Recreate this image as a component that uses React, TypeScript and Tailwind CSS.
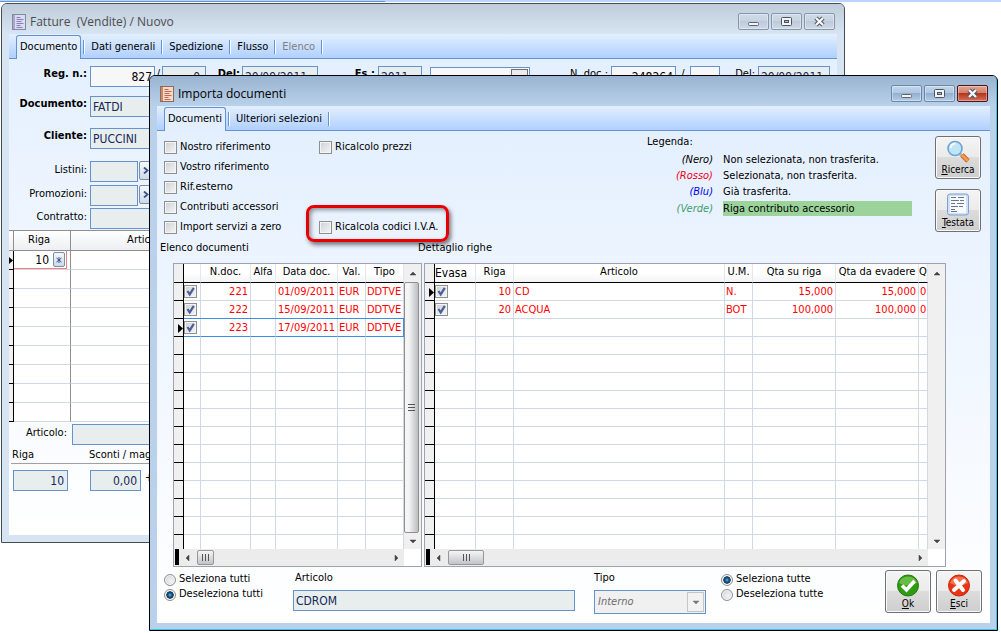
import { ReactNode } from 'react'
import clsx from 'clsx'

interface WindowProps {
  title: string
  active?: boolean
  className?: string
  children: ReactNode
}

interface Tab {
  label: string
  disabled?: boolean
}

interface Column {
  label: string
  width?: string
  align?: string
  large?: boolean
}

interface GridRow {
  cells: string[]
  current?: boolean
  selected?: boolean
}

const invoiceTabs: Tab[] = [
  { label: 'Documento' },
  { label: 'Dati generali' },
  { label: 'Spedizione' },
  { label: 'Flusso' },
  { label: 'Elenco', disabled: true },
]

const importTabs: Tab[] = [{ label: 'Documenti' }, { label: 'Ulteriori selezioni' }]

const documentColumns: Column[] = [
  { label: '', width: 'w-[17px]' },
  { label: 'N.doc.', width: 'w-[50px]', align: 'text-right' },
  { label: 'Alfa', width: 'w-[25px]' },
  { label: 'Data doc.', width: 'w-[62px]', align: 'text-right' },
  { label: 'Val.', width: 'w-[28px]' },
  { label: 'Tipo' },
]

const documentRows: GridRow[] = [
  { cells: ['221', '', '01/09/2011', 'EUR', 'DDTVE'] },
  { cells: ['222', '', '15/09/2011', 'EUR', 'DDTVE'] },
  { cells: ['223', '', '17/09/2011', 'EUR', 'DDTVE'], current: true, selected: true },
]

const lineColumns: Column[] = [
  { label: 'Evasa', width: 'w-[41px]', large: true },
  { label: 'Riga', width: 'w-[38px]', align: 'text-right' },
  { label: 'Articolo' },
  { label: 'U.M.', width: 'w-[28px]' },
  { label: 'Qta su riga', width: 'w-[83px]', align: 'text-right' },
  { label: 'Qta da evadere', width: 'w-[83px]', align: 'text-right' },
  { label: 'Q', width: 'w-[9px]' },
]

const lineRows: GridRow[] = [
  { cells: ['10', 'CD', 'N.', '15,000', '15,000', '0'], current: true },
  { cells: ['20', 'ACQUA', 'BOT', '100,000', '100,000', '0'] },
]

const legend = [
  { name: '(Nero)', color: 'text-black', text: 'Non selezionata, non trasferita.' },
  { name: '(Rosso)', color: 'text-[#f00020]', text: 'Selezionata, non trasferita.' },
  { name: '(Blu)', color: 'text-[#0000f0]', text: 'Già trasferita.' },
  { name: '(Verde)', color: 'text-[#3c9c70]', text: 'Riga contributo accessorio', filled: true },
]

function DocIcon({ active }: { active?: boolean }) {
  const ink = active ? '#a8452c' : '#6a62a8'
  return (
    <svg width="14" height="16" viewBox="0 0 14 16" className="shrink-0">
      <rect x="0.5" y="0.5" width="13" height="15" fill={active ? '#f6d9c4' : '#dcdcf0'} stroke={active ? '#8d6a5c' : '#8488a4'} />
      <rect x="1" y="1" width="2" height="14" fill={active ? '#c98a6a' : '#a9a8cc'} />
      <path d="M4.5 3.5h4M4.5 5.5h7M4.5 7.5h5M4.5 9.5h7M4.5 11.5h4M4.5 13.5h6" stroke={ink} opacity="0.75" />
    </svg>
  )
}

function CaptionButton({ kind, active }: { kind: 'min' | 'max' | 'close'; active?: boolean }) {
  const red = active && kind === 'close'
  return (
    <button
      aria-label={kind}
      className={clsx(
        'flex h-[17px] w-[31px] items-center justify-center rounded-[2px] border shadow-[inset_0_0_0_1px_rgba(255,255,255,0.35)]',
        red
          ? 'border-[#4a1418] bg-[linear-gradient(#e2a594,#d37d69_48%,#b6361d_50%,#d4705a)]'
          : active
            ? 'border-[#6d87a8] bg-[linear-gradient(#c2d5ea,#afc7e1_48%,#93b0d0_50%,#b4cce6)]'
            : 'border-[#8795ab] bg-[linear-gradient(#cfdbe7,#c6d3e1_48%,#bccada_50%,#cddae7)]'
      )}
    >
      <svg width="13" height="11" viewBox="0 0 13 11">
        {kind === 'min' && <rect x="1.5" y="6.5" width="10" height="3" rx="1" fill="#f4f4f4" stroke="#5b6270" />}
        {kind === 'max' && (
          <>
            <rect x="1.5" y="1.5" width="10" height="8" rx="1" fill="#f4f4f4" stroke="#4c5462" />
            <rect x="4.5" y="4.5" width="4" height="2" fill="#a9bcd2" stroke="#4c5462" />
          </>
        )}
        {kind === 'close' && (
          <>
            <path d="M3 2l7 7M10 2l-7 7" stroke="#4c5462" strokeWidth="4.4" />
            <path d="M3 2l7 7M10 2l-7 7" stroke="#f6f6f6" strokeWidth="2.4" />
          </>
        )}
      </svg>
    </button>
  )
}

function Window({ title, active, className, children }: WindowProps) {
  return (
    <section
      className={clsx(
        'absolute overflow-hidden rounded-t-[6px] border',
        active
          ? 'border-black bg-[#b9d1ea] shadow-[inset_-1px_-1px_0_#35c5e8]'
          : 'border-[#444c55] bg-[#d7e4f2]',
        className
      )}
    >
      <header
        className={clsx(
          'flex h-[30px] items-center gap-1 pt-[5px] pl-[10px] font-["Open_Sans",sans-serif] text-[12px]',
          active
            ? 'mr-px bg-linear-to-b from-[#99b4d1] to-[#b9d1ea] pr-2 text-black'
            : 'bg-linear-to-b from-[#bfcddb] to-[#d7e4f2] pr-[9px] text-[#4c4c4c]'
        )}
      >
        <DocIcon active={active} />
        <h1 className="flex-1 whitespace-pre">{title}</h1>
        <div className="flex gap-[2px]">
          <CaptionButton kind="min" active={active} />
          <CaptionButton kind="max" active={active} />
          <CaptionButton kind="close" active={active} />
        </div>
      </header>
      <div className="mx-[7px] mb-[7px] bg-linear-to-b from-[#e3efff] to-white">{children}</div>
    </section>
  )
}

function TabStrip({ tabs }: { tabs: Tab[] }) {
  return (
    <div role="tablist" className="flex h-[25px] items-end border-b border-[#6593cf] bg-linear-to-b from-[#e3efff] to-[#b0d0ff] pl-[7px]">
      {tabs.map((tab, i) => (
        <div key={tab.label} className="flex items-center">
          <button
            role="tab"
            aria-selected={i === 0}
            disabled={tab.disabled}
            className={clsx(
              'whitespace-nowrap',
              i === 0
                ? '-mb-px h-[24px] rounded-t-[3px] border border-b-0 border-[#6593cf] bg-[#e3efff] px-[3px]'
                : 'h-[23px] px-[6px] pt-px',
              tab.disabled && 'text-[#808080]'
            )}
          >
            {tab.label}
          </button>
          <span className={clsx('h-[14px] w-[2px] border-r border-l border-r-white border-l-[#6593cf]', i === 0 && 'ml-[2px]')} />
        </div>
      ))}
    </div>
  )
}

function Check({ label, checked, className }: { label?: string; checked?: boolean; className?: string }) {
  return (
    <label className={clsx('flex items-center gap-[3px] whitespace-nowrap', className)}>
      <span className="relative block size-[13px] shrink-0">
        <input
          type="checkbox"
          defaultChecked={checked}
          aria-label={label ?? 'Seleziona'}
          className="peer block size-[13px] appearance-none border border-[#8e8f8f] bg-linear-to-br from-[#cdd1d5] to-[#f6f6f6] shadow-[inset_0_0_0_1px_#f4f4f4]"
        />
        <svg viewBox="0 0 13 13" className="pointer-events-none absolute inset-0 hidden peer-checked:block">
          <path d="M3.5 6l2.2 3.4L9.8 2.8" fill="none" stroke="#4a5f97" strokeWidth="2.2" />
        </svg>
      </span>
      {label}
    </label>
  )
}

function Radio({ name, label, checked }: { name: string; label: string; checked?: boolean }) {
  return (
    <label className="flex h-[15px] items-center gap-[3px] whitespace-nowrap">
      <input
        type="radio"
        name={name}
        defaultChecked={checked}
        className="size-[12px] appearance-none rounded-full border border-[#8e8f8f] bg-[radial-gradient(circle_at_60%_60%,#f4f4f4,#c8ccd0)] shadow-[inset_0_0_0_1px_#fafafa] checked:bg-[radial-gradient(circle,#5cc0ea_0,#1b5c94_25%,#12324f_48%,#eef0f2_58%)]"
      />
      {label}
    </label>
  )
}

function Field({ label, value, className }: { label: string; value?: string; className?: string }) {
  return (
    <input
      aria-label={label}
      defaultValue={value}
      className={clsx('h-[21px] shrink-0 border border-[#6593cf] px-[2px] text-[12px] leading-4', className)}
    />
  )
}

const shaded = 'bg-[#e8eeee] text-[#14285a]'

function Arrow({ dir }: { dir: 'up' | 'down' | 'left' | 'right' }) {
  const d = { up: 'M1 6l3-3 3 3z', down: 'M1 3l3 3 3-3z', left: 'M6 1v6l-3-3z', right: 'M3 1v6l3-3z' }[dir]
  return (
    <svg width="8" height="8" viewBox="0 0 8 8" className="shrink-0">
      <path d={d} fill="#444" stroke="#444" strokeWidth="0.5" />
    </svg>
  )
}

function DataGrid({ columns, rows, thumb, className }: { columns: Column[]; rows: GridRow[]; thumb: string; className?: string }) {
  const blanks = Array.from({ length: 15 - rows.length }, (): GridRow => ({ cells: columns.slice(1).map(() => '') }))
  return (
    <div className={clsx('border border-[#a0a3ab] bg-white', className)}>
      <div className="flex h-[285px]">
        <div className="min-w-0 flex-1 overflow-hidden">
          <table className="w-full table-fixed border-separate border-spacing-0">
            <thead>
              <tr className="h-[19px] bg-linear-to-b from-white from-50% to-[#f1f2f4]">
                <th className="w-[10px] border-r border-b border-black bg-[#f0f0f0]" />
                {columns.map((col, i) => (
                  <th
                    key={i}
                    className={clsx(
                      'overflow-hidden border-r border-b border-r-[#e4e7ec] border-b-black p-0 font-normal whitespace-nowrap',
                      col.width,
                      col.large ? 'text-left text-[12px] leading-[16px]' : 'pb-[3px] leading-[15px]'
                    )}
                  >
                    {col.label}
                  </th>
                ))}
              </tr>
            </thead>
            <tbody>
              {[...rows, ...blanks].map((row, r) => {
                const line = row.selected
                  ? 'border-b border-b-[#3a8ee6] border-r border-r-[#d0d7e5] shadow-[0_-1px_0_#3a8ee6] last:border-r-[#3a8ee6]'
                  : 'border-r border-b border-[#d0d7e5]'
                return (
                  <tr key={r} className="h-[18px]">
                    <td className="border-r border-b border-black bg-[#f0f0f0] p-0">
                      {row.current && (
                        <svg width="9" height="9" viewBox="0 0 9 9" className="mt-[2px] block">
                          <path d="M4 0l5 4.5-5 4.5z" />
                        </svg>
                      )}
                    </td>
                    <td className={clsx('p-0', line)}>{r < rows.length && <Check checked className="mb-px" />}</td>
                    {row.cells.map((cell, c) => (
                      <td
                        key={c}
                        className={clsx(
                          'overflow-hidden p-0 px-px pt-px leading-4 whitespace-nowrap text-[#ff0000]',
                          line,
                          columns[c + 1].align === 'text-right' && 'pr-[2px] text-right'
                        )}
                      >
                        {cell}
                      </td>
                    ))}
                  </tr>
                )
              })}
            </tbody>
          </table>
        </div>
        <div className="flex w-[17px] flex-col items-center bg-[#f0f0f0]">
          <div className="flex h-[18px] items-center">
            <Arrow dir="up" />
          </div>
          <div className="flex w-full flex-1 items-center">
            {columns.length === 6 && (
              <div className="flex h-full w-[15px] items-center justify-center rounded-[2px] border border-[#8f8f8f] bg-linear-to-r from-[#f5f5f5] from-30% to-[#bcbdc2]">
                <span className="h-[7px] w-[7px] bg-[repeating-linear-gradient(#555_0_1px,transparent_1px_3px)]" />
              </div>
            )}
          </div>
          <div className="flex h-[16px] items-center">
            <Arrow dir="down" />
          </div>
        </div>
      </div>
      <div className="flex h-[17px]">
        <div className="flex flex-1 items-center bg-[#ececec] pl-px">
          <span className="mb-px h-[16px] w-[4px] bg-black" />
          <span className="mx-[4px] flex">
            <Arrow dir="left" />
          </span>
          <div className={clsx('ml-[2px] flex h-[15px] items-center justify-center rounded-[2px] border border-[#979797] bg-linear-to-b from-[#f5f5f5] to-[#c3c4c8]', thumb)}>
            <span className="h-[7px] w-[7px] bg-[repeating-linear-gradient(90deg,#555_0_1px,transparent_1px_3px)]" />
          </div>
          <span className="mr-[4px] ml-auto">
            <Arrow dir="right" />
          </span>
        </div>
        <div className="w-[17px]" />
      </div>
    </div>
  )
}

function ToolButton({ label, children }: { label: string; children: ReactNode }) {
  return (
    <button className="flex h-[43px] w-[46px] shrink-0 flex-col items-center rounded-[3px] border border-[#707070] bg-[linear-gradient(#f4f4f4,#ebebeb_48%,#dcdcdc_50%,#cecece)] pt-[3px] text-[10px] leading-[14px] shadow-[inset_0_0_0_1px_#fafafa]">
      {children}
      <span>
        <u>{label[0]}</u>
        {label.slice(1)}
      </span>
    </button>
  )
}

function SearchIcon() {
  return (
    <svg width="24" height="23" viewBox="0 0 24 23">
      <path d="M14 14l3 2.500" stroke="#a9b4bf" strokeWidth="3" />
      <path d="M16 15l6 6" stroke="#c5622a" strokeWidth="4.600" />
      <path d="M16 15l6 6" stroke="#f59a4c" strokeWidth="3" />
      <circle cx="9" cy="8.500" r="7" fill="#bfe6f8" stroke="#6fa3cf" strokeWidth="1.600" />
      <path d="M4.500 8a5 5 0 0 1 5-4.500" fill="none" stroke="#fff" strokeWidth="2" />
    </svg>
  )
}

function SheetIcon() {
  return (
    <svg width="24" height="23" viewBox="0 0 24 23">
      <rect x="1.500" y="1" width="21" height="21" rx="2.500" fill="#cfe0f8" stroke="#7f9fd0" />
      <rect x="4" y="3" width="16" height="17" fill="#f6faff" />
      <path d="M5 4.500h5M12 4.500h6M5 7.500h8M14 7.500h4M5 10.500h4M11 10.500h7M5 13.500h7M13 13.500h4M5 16.500h4M5 18.500h6" stroke="#6c7686" />
    </svg>
  )
}

function OkIcon() {
  return (
    <svg width="24" height="23" viewBox="0 0 24 23">
      <circle cx="12" cy="11.500" r="10.500" fill="#2f9a12" stroke="#1f7a0c" />
      <path d="M3 9a9.500 9.500 0 0 1 18 0q-9 5-18 0z" fill="#7fca5c" opacity="0.7" />
      <path d="M6 11.500l4.500 4.500 8-9" fill="none" stroke="#fff" strokeWidth="3.600" />
    </svg>
  )
}

function ExitIcon() {
  return (
    <svg width="24" height="23" viewBox="0 0 24 23">
      <circle cx="12" cy="11.500" r="10.500" fill="#ea3312" stroke="#c42408" />
      <path d="M3 9a9.500 9.500 0 0 1 18 0q-9 5-18 0z" fill="#f98a6c" opacity="0.7" />
      <path d="M8.500 6.500l7.500 9.500M17 7l-10 9" stroke="#fff" strokeWidth="4" strokeLinecap="round" />
    </svg>
  )
}

function SideLabel({ children, bold }: { children: ReactNode; bold?: boolean }) {
  return (
    <span className={clsx('mr-[3px] w-[78px] shrink-0 text-right leading-[15px] whitespace-nowrap', bold ? 'font-bold' : 'pt-px')}>
      {children}
    </span>
  )
}

function LookupButton() {
  return (
    <button aria-label="Cerca" className="ml-px flex h-[19px] w-[14px] items-center justify-center rounded-[2px] border border-[#7d8da8] bg-linear-to-b from-[#f4f8fd] to-[#ccdaec]">
      <svg width="6" height="7" viewBox="0 0 6 7">
        <path d="M1 0.500l3.500 3-3.500 3" fill="none" stroke="#3c5484" strokeWidth="1.800" />
      </svg>
    </button>
  )
}

function InvoiceWindow() {
  return (
    <Window title="Fatture  (Vendite) / Nuovo" className="top-[3px] right-[156px] left-px">
      <TabStrip tabs={invoiceTabs} />
      <div className="h-[476px] overflow-hidden pt-[7px]">
        <div className="flex h-[30px] items-start leading-[15px] whitespace-nowrap">
          <SideLabel bold>Reg. n.:</SideLabel>
          <Field label="Reg. n." value="827" className="w-[65px] bg-[#f7f7f7] text-right" />
          <span className="w-[7px] text-center">/</span>
          <Field label="Sottonumero" value="0" className={clsx('w-[44px] pr-[5px] text-right', shaded)} />
          <span className="w-[36px] pr-[2px] text-right font-bold">Del:</span>
          <Field label="Del" value="20/09/2011" className={clsx('w-[76px]', shaded)} />
          <span className="w-[60px] pr-[3px] text-right font-bold">Es.:</span>
          <Field label="Esercizio" value="2011" className={clsx('w-[44px]', shaded)} />
          <span className="relative mt-px ml-[8px] block h-[24px] w-[100px] border border-[#6593cf] bg-[#f7f7f7]">
            <select aria-label="Stato" className="h-full w-full appearance-none px-[3px] text-[11px]">
              <option>Confermato</option>
            </select>
            <span className="pointer-events-none absolute top-px right-px flex h-5 w-[17px] items-center justify-center border border-[#707070] bg-[#ececec]">
              <Arrow dir="down" />
            </span>
          </span>
          <span className="ml-auto pr-[3px]">N. doc.:</span>
          <Field label="N. doc." value="248264" className="w-[65px] bg-[#f7f7f7] text-right" />
          <span className="w-[14px] text-center">/</span>
          <Field label="Serie" className="w-[30px] bg-[#f7f7f7]" />
          <span className="w-[38px] pr-[3px] text-right">Del:</span>
          <Field label="Data documento" value="20/09/2011" className={clsx('mr-[7px] w-[72px]', shaded)} />
        </div>
        <div className="flex h-[32px]">
          <SideLabel bold>Documento:</SideLabel>
          <Field label="Documento" value="FATDI" className={clsx('w-[90px]', shaded)} />
        </div>
        <div className="flex h-[33px]">
          <SideLabel bold>Cliente:</SideLabel>
          <Field label="Cliente" value="PUCCINI" className={clsx('w-[90px]', shaded)} />
        </div>
        <div className="flex h-[24px]">
          <SideLabel>Listini:</SideLabel>
          <Field label="Listini" className={clsx('w-[48px]', shaded)} />
          <LookupButton />
        </div>
        <div className="flex h-[23px]">
          <SideLabel>Promozioni:</SideLabel>
          <Field label="Promozioni" className={clsx('w-[48px]', shaded)} />
          <LookupButton />
        </div>
        <div className="flex h-[22px]">
          <SideLabel>Contratto:</SideLabel>
          <Field label="Contratto" className={clsx('w-[90px]', shaded)} />
        </div>
        <table className="w-full table-fixed border-separate border-spacing-0 border-t border-[#8f8f8f]">
          <thead>
            <tr className="h-[20px] bg-linear-to-b from-white to-[#eceef2]">
              <th className="w-[5px] border-r border-b border-[#8f8f8f] p-0" />
              <th className="w-[57px] border-r border-b border-[#8f8f8f] p-0 pr-[6px] font-normal">Riga</th>
              <th className="w-[150px] border-b border-[#8f8f8f] p-0 font-normal">Articolo</th>
              <th className="border-b border-[#8f8f8f] p-0" />
            </tr>
          </thead>
          <tbody className="bg-white">
            {Array.from({ length: 9 }, (_, r) => (
              <tr key={r} className="h-[19px]">
                <td className="border-r border-b border-black bg-[#f0f0f0] p-0">
                  {r === 0 && (
                    <svg width="4" height="7" viewBox="0 0 4 7" className="block">
                      <path d="M0 0l4 3.500-4 3.500z" />
                    </svg>
                  )}
                </td>
                <td className="border-r border-b border-r-[#8f8f8f] border-b-[#d0d7e5] p-0">
                  {r === 0 && (
                    <div className="mr-[3px] flex h-[18px] items-center justify-end gap-[4px] border-r border-b border-[#f08080] pr-px text-[12px] leading-4">
                      10
                      <button aria-label="Dettaglio" className="flex h-[15px] w-[12px] items-center justify-center rounded-[2px] border border-[#7d8da8] bg-linear-to-b from-[#f4f8fd] to-[#ccdaec]">
                        <svg width="6" height="6" viewBox="0 0 6 6">
                          <path d="M3 0v6M0.500 1l5 4M5.500 1l-5 4" stroke="#3c5484" />
                        </svg>
                      </button>
                    </div>
                  )}
                </td>
                <td className="border-b border-[#d0d7e5] p-0" />
                <td className="border-b border-[#d0d7e5] p-0" />
              </tr>
            ))}
          </tbody>
        </table>
        <div className="mt-[2px] flex h-[22px]">
          <span className="w-[58px] text-right leading-[18px]">Articolo:</span>
          <Field label="Articolo" className={clsx('ml-[5px] w-[200px]', shaded)} />
        </div>
        <div className="ml-[2px] flex h-[18px] border-b border-[#a0a0a0] pl-px leading-[17px]">
          <span className="w-[77px]">Riga</span>
          <span>Sconti / maggiorazioni</span>
        </div>
        <div className="flex pt-[6px] pl-[4px]">
          <Field label="Riga" value="10" className={clsx('w-[55px] pr-[3px] text-right', shaded)} />
          <Field label="Sconto" value="0,00" className={clsx('ml-[22px] w-[51px] pr-[3px] text-right', shaded)} />
          <span className="ml-[4px] leading-[16px]">+</span>
        </div>
      </div>
    </Window>
  )
}

function ImportWindow() {
  return (
    <Window title="Importa documenti" active className="top-[75px] right-[3px] left-[149px]">
      <TabStrip tabs={importTabs} />
      <div className="flex h-[106px] items-start pr-[9px] pl-[7px]">
        <div className="mt-[6px] grid auto-rows-[20px] grid-cols-[155px_auto]">
          <Check label="Nostro riferimento" />
          <Check label="Ricalcolo prezzi" />
          <Check label="Vostro riferimento" className="col-start-1" />
          <Check label="Rif.esterno" className="col-start-1" />
          <Check label="Contributi accessori" className="col-start-1" />
          <Check label="Import servizi a zero" className="col-start-1" />
          <div className="relative flex">
            <Check label="Ricalcola codici I.V.A." />
            <span className="pointer-events-none absolute -top-[12px] -left-[13px] h-[37px] w-[143px] rounded-[8px] border-[3px] border-[#e80000] shadow-[2px_3px_4px_rgba(0,0,0,0.5),inset_2px_2px_4px_rgba(0,0,0,0.4)]" />
          </div>
        </div>
        <div className="mt-[3px] ml-auto w-[265px] leading-4">
          <p className="mb-[2px]">Legenda:</p>
          {legend.map((item) => (
            <div key={item.name} className={clsx('flex h-4', item.filled && 'mt-px')}>
              <span className={clsx('mr-[10px] w-[66px] text-right italic', item.color)}>{item.name}</span>
              <span className={clsx('flex-1', item.filled && 'h-[15px] bg-[#9bd39b] leading-[15px]')}>{item.text}</span>
            </div>
          ))}
        </div>
        <div className="mt-[5px] ml-[23px] flex flex-col gap-[10px]">
          <ToolButton label="Ricerca">
            <SearchIcon />
          </ToolButton>
          <ToolButton label="Testata">
            <SheetIcon />
          </ToolButton>
        </div>
      </div>
      <div className="flex pr-[44px]">
        <div className="w-[261px] shrink-0">
          <h2 className="h-[26px] pl-[3px] leading-[22px]">Elenco documenti</h2>
          <DataGrid columns={documentColumns} rows={documentRows} thumb="w-[17px]" className="ml-4 w-[249px]" />
        </div>
        <div className="min-w-0 flex-1">
          <h2 className="h-[26px] leading-[22px]">Dettaglio righe</h2>
          <DataGrid columns={lineColumns} rows={lineRows} thumb="w-[36px]" className="ml-[6px]" />
        </div>
      </div>
      <div className="flex h-[56px] items-start pt-[3px] pr-[8px] pl-[7px]">
        <div className="mt-[2px] w-[129px] shrink-0">
          <Radio name="documenti" label="Seleziona tutti" />
          <Radio name="documenti" label="Deseleziona tutti" checked />
        </div>
        <label className="flex flex-1 flex-col">
          <span className="h-5 pl-[2px] leading-[16px]">Articolo</span>
          <Field label="Articolo" value="CDROM" className={clsx('w-full', shaded)} />
        </label>
        <label className="ml-[19px] flex w-[112px] flex-col">
          <span className="h-5 leading-[16px]">Tipo</span>
          <span className="relative block h-[24px] border border-[#6593cf] bg-[#f0f0f0]">
            <select disabled className="h-full w-full appearance-none px-[3px] text-[11px] text-[#6d6d6d] italic opacity-100">
              <option>Interno</option>
            </select>
            <span className="pointer-events-none absolute top-px right-px flex h-5 w-[17px] items-center justify-center border border-[#b4b4b4] bg-[#f4f4f4] opacity-70">
              <Arrow dir="down" />
            </span>
          </span>
        </label>
        <div className="mt-[2px] ml-[15px] w-[164px] shrink-0">
          <Radio name="righe" label="Seleziona tutte" checked />
          <Radio name="righe" label="Deseleziona tutte" />
        </div>
        <div className="flex gap-[5px]">
          <ToolButton label="Ok">
            <OkIcon />
          </ToolButton>
          <ToolButton label="Esci">
            <ExitIcon />
          </ToolButton>
        </div>
      </div>
    </Window>
  )
}

export default function App() {
  return (
    <main className='relative min-h-screen overflow-hidden bg-white font-["DejaVu_Sans_Condensed","DejaVu_Sans",sans-serif] text-[11px] text-black'>
      <div className="h-[2px] bg-[#b8d4ff]">
        <div className="h-full w-[385px] border-b border-[#6593cf]" />
      </div>
      <InvoiceWindow />
      <ImportWindow />
    </main>
  )
}
